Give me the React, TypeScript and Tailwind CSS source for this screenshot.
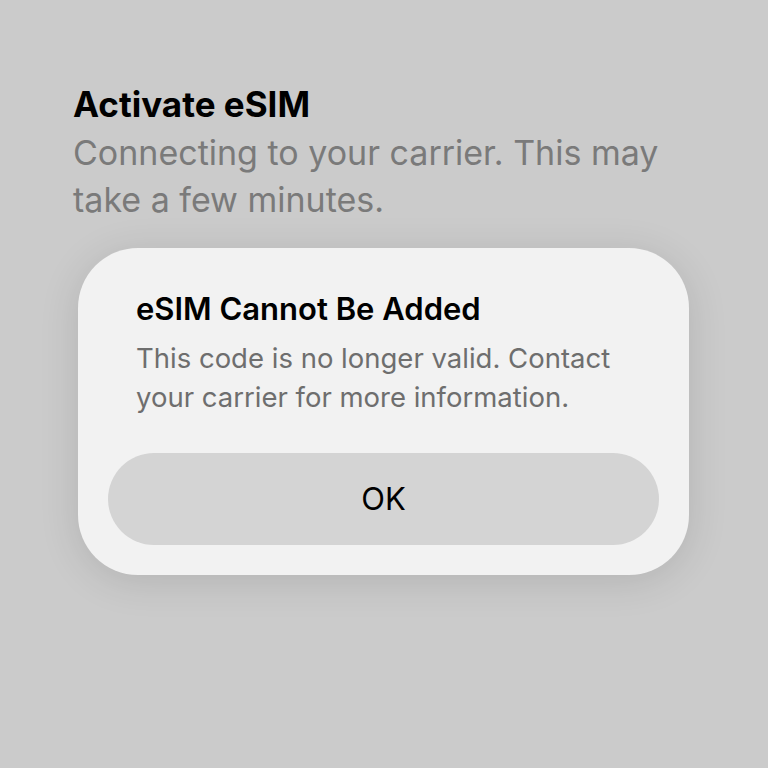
export default function App() {
  return (
    <div className="w-[768px] h-[768px] bg-[#cbcbcb] overflow-hidden font-['Inter',sans-serif]">
      <div className="pt-[84px] pl-[73px] pr-[20px]">
        <h1 className="text-[35px] leading-[40px] font-bold text-black">Activate eSIM</h1>
        <p className="mt-[5px] text-[34px] leading-[47px] text-[#7a7a7a]">
          Connecting to your carrier. This may
          <br />
          take a few minutes.
        </p>
      </div>
      <div className="mt-[25px] ml-[78px] w-[611px] h-[327px] rounded-[60px] bg-[#f2f2f2] shadow-[0_6px_40px_rgba(0,0,0,0.12)] flex flex-col px-[30px] pt-[41px]">
        <div className="px-[28px]">
          <h2 className="text-[31px] leading-[40px] font-semibold text-black">eSIM Cannot Be Added</h2>
          <p className="mt-[10px] text-[27.5px] leading-[39px] text-[#6e6e6e]">
            This code is no longer valid. Contact
            <br />
            your carrier for more information.
          </p>
        </div>
        <button className="mt-[36px] h-[92px] w-full rounded-full bg-[#d4d4d4] text-[31px] text-black">
          OK
        </button>
      </div>
    </div>
  )
}
